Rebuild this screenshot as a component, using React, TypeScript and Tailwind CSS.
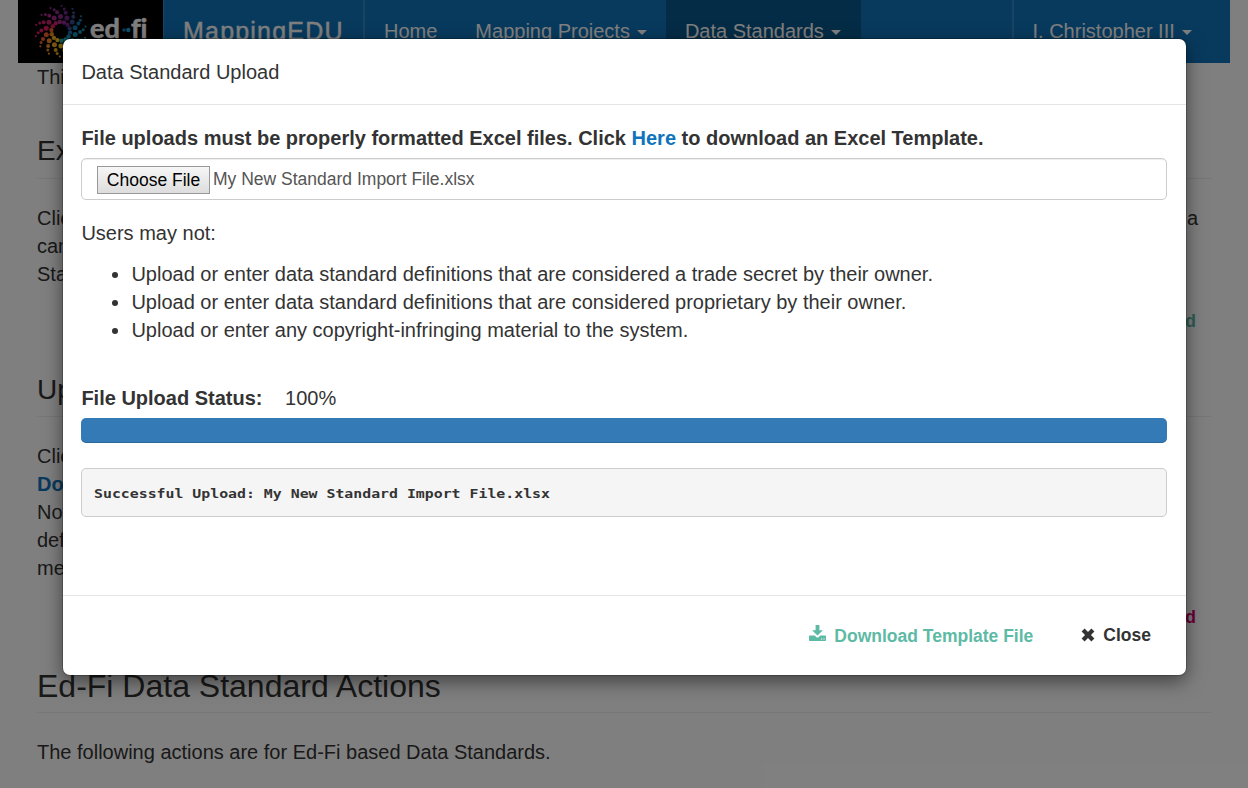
import React from 'react';

const armColors = [
  '#6e2488', '#8a2a8c', '#a02a86', '#c4206c', '#e01c62', '#f0602c', '#f08c28',
  '#f8b020', '#f8c81c', '#28b4a0', '#18a8b8', '#1094b4', '#1478b0', '#3c4888',
];
const armDots = [
  { radius: 25.3, turn: 0, size: 1.1 },
  { radius: 22.6, turn: 7, size: 1.5 },
  { radius: 19.3, turn: 13, size: 2 },
  { radius: 14.8, turn: 23, size: 2.5 },
  { radius: 9.4, turn: 44, size: 2.2 },
];

const Logo = () => (
  <svg viewBox="18 0 145 63" width="145" height="63">
    {armColors.map((color, arm) =>
      armDots.map(({ radius, turn, size }) => {
        const angle = ((-88 - (arm * 360) / 14 + turn) * Math.PI) / 180;
        return (
          <circle
            key={`${arm}-${radius}`}
            cx={60.7 + radius * Math.cos(angle)}
            cy={31.3 + radius * Math.sin(angle)}
            r={size}
            fill={color}
          />
        );
      }),
    )}
    <g fill="#fff" stroke="#fff" strokeWidth="0.6" className="font-['Lato',sans-serif] text-[27px] font-bold">
      <text x="90" y="37.6">ed</text>
      <text x="131" y="37.6">f</text>
      <text x="140.4" y="37.6">i</text>
    </g>
    <circle cx="124" cy="30" r="1.8" fill="#1478b0" />
    <circle cx="128.3" cy="30" r="2.2" fill="#18a0d0" />
  </svg>
);

const Caret = () => (
  <span className="ml-[7px] inline-block border-x-[5px] border-t-[5px] border-x-transparent border-t-current align-middle" />
);

const DownloadIcon = () => (
  <svg width="17" height="17" viewBox="0 0 17 17" fill="currentColor">
    <path d="M6.6 0h3.8v5.2h3.5L8.5 10.6 3.1 5.2h3.5z" />
    <path
      fillRule="evenodd"
      d="M.8 10.4h4.9l1.5 1.5q1.3 1.1 2.6 0l1.5-1.5h4.9q.8 0 .8.8v4q0 .8-.8.8H.8q-.8 0-.8-.8v-4q0-.8.8-.8zM12 13.4v1.2h1.2v-1.2zM14.4 13.4v1.2h1.2v-1.2z"
    />
  </svg>
);

const CloseIcon = () => (
  <svg width="14" height="14" viewBox="0 0 14 14" stroke="currentColor" strokeWidth="4.2">
    <path d="M2.1 2.1l9.8 9.8M11.9 2.1l-9.8 9.8" />
  </svg>
);

export default function App() {
  return (
    <div className="relative h-[788px] w-[1248px] overflow-hidden bg-white font-['Liberation_Sans',Arial,sans-serif] text-[20px] leading-7 text-[#333]">
      <nav className="mx-[18px] flex h-[63px] bg-[#1074bc] text-white">
        <div className="w-[145px] bg-black"><Logo /></div>
        <div className="w-[200px] border-l border-white/15 pl-[19px] pt-[17px] text-[25px] tracking-[1.2px] [-webkit-text-stroke:0.4px]">MappingEDU</div>
        <div className="flex flex-1 border-l-2 border-white/15">
          <span className="pl-[19px] pt-[17px]">Home</span>
          <span className="pl-[38px] pt-[17px]">Mapping Projects<Caret /></span>
          <span className="ml-[19px] w-[195px] bg-[#0a588c] pl-[19px] pt-[17px]">Data Standards<Caret /></span>
        </div>
        <div className="w-[218px] border-l-2 border-white/15 pl-[18.5px] pt-[17px]">I. Christopher III<Caret /></div>
      </nav>

      <main className="px-[37px]">
        <p>This</p>
        <h2 className="mr-[-1px] mt-11 border-b border-[#eee] pb-3 text-[28px] leading-[31px]">Exp</h2>
        <div className="mr-[13px] mt-[25px] flex justify-between">
          <p>Click<br />can<br />Stan</p>
          <p>a</p>
        </div>
        <p className="mr-[15px] mt-[19px] text-right text-[17.5px] font-bold text-[#5dbaa5]">d</p>
        <h2 className="mr-[-1px] mt-[39px] border-b border-[#eee] pb-[11px] text-[28px] leading-[31px]">Upl</h2>
        <p className="mt-[25px]">Click<br /><b className="text-[#1074bc]">Dow</b><br />Note<br />defi<br />met</p>
        <p className="mr-[15px] mt-[21px] text-right text-[17.5px] font-bold text-[#d6006c]">d</p>
        <h1 className="mr-[-1px] mt-[38px] border-b border-[#eee] pb-2 text-[32px] leading-[35px]">Ed-Fi Data Standard Actions</h1>
        <p className="mt-[25px]">The following actions are for Ed-Fi based Data Standards.</p>
      </main>

      <div className="absolute inset-0 flex items-start bg-black/50 pl-[63px] pt-[39px]">
        <section className="flex h-[636px] w-[1123px] flex-col rounded-[7px] bg-white shadow-[0_0_0_1px_rgba(0,0,0,0.2),0_6px_19px_rgba(0,0,0,0.5)]">
          <header className="border-b border-[#e5e5e5] pb-[18px] pl-[18.4px] pt-[19px]">Data Standard Upload</header>
          <div className="flex-1 pl-[18px] pr-[19px] pt-[19px]">
            <p className="pl-[.4px] font-bold">
              File uploads must be properly formatted Excel files. Click <a className="text-[#1074bc]">Here</a> to download an Excel Template.
            </p>
            <div className="mt-[6px] flex h-[42px] items-center rounded-[5px] border border-[#ccc] pl-[15px] text-[17.5px] text-[#555] shadow-[inset_0_1px_1px_rgba(0,0,0,0.075)]">
              <button className="mt-[2px] h-7 w-[113px] border border-[#999] bg-linear-to-b from-[#f6f6f6] to-[#dddddd] leading-[26px] text-black">Choose File</button>
              <span className="ml-[3px]">My New Standard Import File.xlsx</span>
            </div>
            <p className="mt-[19px] pl-[.4px]">Users may not:</p>
            <ul className="mt-[13px] list-disc pl-[50.4px]">
              <li>Upload or enter data standard definitions that are considered a trade secret by their owner.</li>
              <li>Upload or enter data standard definitions that are considered proprietary by their owner.</li>
              <li>Upload or enter any copyright-infringing material to the system.</li>
            </ul>
            <p className="mt-10 pl-[.4px]"><b>File Upload Status:</b><span className="ml-[22.5px]">100%</span></p>
            <div className="mt-[6px] h-[25px] rounded-[5px] bg-[#337ab7] shadow-[inset_0_-1px_0_rgba(0,0,0,0.15)]" />
            <div className="mt-[25px] flex h-[49px] items-center rounded-[5px] border border-[#ccc] bg-[#f5f5f5] pl-3">
              <span className="origin-left scale-x-[1.188] whitespace-pre pt-0.5 font-['DejaVu_Sans_Mono',monospace] text-[12.5px] font-bold">Successful Upload: My New Standard Import File.xlsx</span>
            </div>
          </div>
          <footer className="flex h-20 items-start justify-end border-t border-[#e5e5e5] pr-[35px] pt-[25px] text-[17.5px] font-bold">
            <span className="mr-[48px] mt-px flex text-[#5dbaa5]">
              <span className="mr-2 mt-[3px]"><DownloadIcon /></span>Download Template File
            </span>
            <span className="flex">
              <span className="mr-2 mt-[7px]"><CloseIcon /></span>Close
            </span>
          </footer>
        </section>
      </div>
    </div>
  );
}
